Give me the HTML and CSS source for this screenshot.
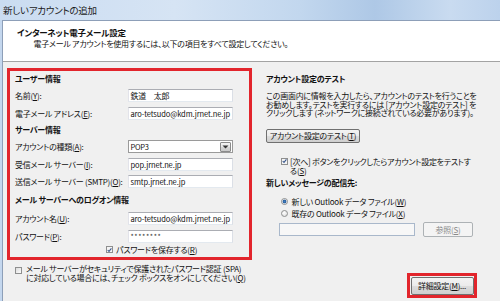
FILE: index.html
```html
<!DOCTYPE html>
<html lang="ja">
<head>
  <meta charset="UTF-8">
  <title>新しいアカウントの追加</title>
  <link rel="stylesheet" href="styles.css">
</head>
<body>
  <div class="window">
    <div class="titlebar">新しいアカウントの追加</div>
    <div class="client">
      <div class="header">
        <h1>インターネット電子メール設定</h1>
        <p>電子メール アカウントを使用するには、以下の項目をすべて設定してください。</p>
      </div>

      <div class="main">
        <div class="left">
          <div class="mark fields">
            <h2 class="h-user">ユーザー情報</h2>
            <div class="row"><span class="label">名前(<u>Y</u>):</span><span class="input">鉄道　太郎</span></div>
            <div class="row"><span class="label">電子メール アドレス(<u>E</u>):</span><span class="input latin">aro-tetsudo@kdm.jrnet.ne.jp</span></div>

            <h2 class="h-server">サーバー情報</h2>
            <div class="row"><span class="label">アカウントの種類(<u>A</u>):</span>
              <span class="input select"><span class="value">POP3</span><span class="arrow"><svg width="7" height="4" viewBox="0 0 7 4"><path d="M0.5 0.5 L3.5 3.5 L6.5 0.5 Z" fill="#333"/></svg></span></span>
            </div>
            <div class="row"><span class="label">受信メール サーバー(<u>I</u>):</span><span class="input latin">pop.jrnet.ne.jp</span></div>
            <div class="row"><span class="label">送信メール サーバー (SMTP)(<u>O</u>):</span><span class="input latin">smtp.jrnet.ne.jp</span></div>

            <h2 class="h-logon">メール サーバーへのログオン情報</h2>
            <div class="row"><span class="label">アカウント名(<u>U</u>):</span><span class="input latin">aro-tetsudo@kdm.jrnet.ne.jp</span></div>
            <div class="row"><span class="label">パスワード(<u>P</u>):</span><span class="input pwd">********</span></div>
            <div class="row save">
              <span class="check on"><svg width="6" height="6" viewBox="0 0 6 6"><path d="M0.8 3 L2.4 4.7 L5.3 1" fill="none" stroke="#3c5a8f" stroke-width="1.3"/></svg></span>
              <span>パスワードを保存する(<u>R</u>)</span>
            </div>
          </div>

          <div class="spa">
            <span class="check"></span>
            <p>メール サーバーがセキュリティで保護されたパスワード認証 (SPA)<br>に対応している場合には、チェック ボックスをオンにしてください(<u>Q</u>)</p>
          </div>
        </div>

        <div class="right">
          <h2>アカウント設定のテスト</h2>
          <p class="note">この画面内に情報を入力したら、アカウントのテストを行うことを<br>お勧めします。テストを実行するには [アカウント設定のテスト] を<br>クリックします (ネットワークに接続されている必要があります)。</p>
          <div class="btn test"><span>アカウント設定のテスト(<u>T</u>)</span></div>

          <div class="next">
            <span class="check on"><svg width="6" height="6" viewBox="0 0 6 6"><path d="M0.8 3 L2.4 4.7 L5.3 1" fill="none" stroke="#3c5a8f" stroke-width="1.3"/></svg></span>
            <p>[次へ] ボタンをクリックしたらアカウント設定をテストす<br>る(<u>S</u>)</p>
          </div>

          <h2 class="h-dest">新しいメッセージの配信先:</h2>
          <div class="radio-row"><span class="radio on"></span><span>新しい Outlook データ ファイル(<u>W</u>)</span></div>
          <div class="radio-row"><span class="radio"></span><span>既存の Outlook データ ファイル(<u>X</u>)</span></div>
          <div class="browse">
            <span class="path"></span>
            <span class="btn off"><span>参照(<u>S</u>)</span></span>
          </div>

          <div class="actions">
            <div class="mark thin"><span class="btn more"><span>詳細設定(<u>M</u>)...</span></span></div>
          </div>
        </div>
      </div>
    </div>
  </div>
</body>
</html>
```

FILE: styles.css
```css
* { margin: 0; padding: 0; box-sizing: border-box; }

body {
  width: 500px; height: 301px; overflow: hidden;
  font-family: "Noto Sans CJK JP", sans-serif;
  font-size: 8px; color: #111;
  letter-spacing: -0.25px;
  font-feature-settings: "palt";
  background: #c4d7ee;
}

u { text-decoration: underline; text-underline-offset: 1px; }

.window { height: 301px; display: flex; flex-direction: column; }

.titlebar {
  height: 20px; line-height: 20px; padding-left: 3px;
  font-size: 9.5px; color: #1a1a1a;
  background: linear-gradient(90deg, #cadcf1 0%, #d6e4f4 35%, #c2d7ee 60%, #aec8e6 75%, #c9dbf0 90%, #bcd2ec 100%);
}

.client {
  flex: 1; margin-left: 2px;
  border-left: 1px solid #8d9fb8; border-top: 1px solid #8d9fb8;
  background: #f0f0f0;
  display: flex; flex-direction: column;
}

.header {
  height: 41px; background: #fff;
  border-bottom: 1px solid #a3a3a3;
  padding: 4.5px 0 0 14px;
}
.header h1 { font-size: 8.5px; font-weight: 700; line-height: 12px; }
.header p { line-height: 12px; padding-left: 16.5px; }

.main { display: flex; padding: 6px 0 0 4px; gap: 14px; }

/* red marker frame */
.mark { border: 3px solid #e2252c; }

.left { width: 245px; }

.fields { padding: 0 0 3px 5px; }
.fields h2 { font-size: 8px; font-weight: 700; height: 16px; line-height: 16px; }
.fields .h-logon { height: 17px; margin: 2.5px 0 0; line-height: 14px; }

.row { display: flex; align-items: center; height: 17.5px; }
.row .label { width: 113px; white-space: nowrap; }

.input {
  width: 105px; height: 13px;
  border: 1px solid #abadb3; border-color: #abadb3 #dbdfe6 #e3e9ef #e2e3ea;
  background: #fff; padding-left: 1.5px;
  line-height: 11px; white-space: nowrap; overflow: hidden;
}
.input.latin { font-size: 7.5px; letter-spacing: -0.1px; }
.input.pwd { font-size: 7px; letter-spacing: 0.6px; color: #333; }

.select { display: flex; align-items: center; justify-content: space-between; border-color: #9a9a9a; padding-right: 1px; font-size: 7.5px; }
.select .arrow {
  width: 11px; height: 10px;
  border: 1px solid #8b8b8b; border-radius: 1px;
  background: linear-gradient(#f4f4f4, #e6e6e6 50%, #d6d6d6 51%, #c9c9c9);
  display: flex; align-items: center; justify-content: center;
}

.row.save { height: 9px; padding-left: 91px; gap: 3px; }

.check {
  width: 7px; height: 7px; flex: none;
  border: 1px solid #8e8f8f;
  background: linear-gradient(135deg, #dcdcdc, #fdfdfd);
  display: inline-flex; align-items: center; justify-content: center;
}
.check.on { background: #f4f4f4; }

.spa { display: flex; gap: 4px; padding: 5px 0 0 8px; }
.spa .check { margin-top: 1.5px; }
.spa p { line-height: 8.5px; white-space: nowrap; }

.right { width: 211px; padding-top: 4.5px; display: flex; flex-direction: column; }
.right h2 { font-size: 8px; font-weight: 700; line-height: 12px; }
.right .note { margin-top: 7.5px; line-height: 8.5px; white-space: nowrap; }

.btn {
  display: inline-flex; align-items: center; justify-content: center;
  border: 1px solid #707070; border-radius: 2px;
  background: linear-gradient(#f3f3f3 0%, #ebebeb 49%, #dddddd 50%, #cfcfcf 100%);
  white-space: nowrap;
}
.btn.test { width: 94px; height: 13.5px; margin-top: 11.5px; }
.btn.off { border-color: #adb2b5; background: #f4f4f4; color: #8a8a8a; }

.next { display: flex; gap: 2px; padding-left: 15px; margin-top: 14.5px; }
.next .check { margin-top: 0.5px; }
.next p { line-height: 9px; white-space: nowrap; }

.right .h-dest { margin-top: 2px; }

.radio-row { display: flex; align-items: center; gap: 4px; padding-left: 14.5px; height: 12px; white-space: nowrap; }
.h-dest + .radio-row { margin-top: 6px; }

.radio {
  width: 7px; height: 7px; border-radius: 50%; flex: none;
  border: 1px solid #8e8f8f;
  background: radial-gradient(circle at 40% 35%, #ffffff, #d8d8d8);
}
.radio.on { background: radial-gradient(circle, #3f7fbf 0, #2a5f9e 1.6px, #e9eef4 2.2px, #d6d6d6); }

.browse { display: flex; align-items: center; gap: 8px; padding-left: 13px; margin-top: 3px; }
.path { width: 136px; height: 13px; border: 1px solid #a9b8cb; background: #f7f7f7; }
.btn.off { width: 50px; height: 15px; }

.actions { display: flex; justify-content: flex-end; margin-top: 36px; }
.mark.thin { padding: 0.5px; }
.btn.more { width: 63px; height: 18px; }
```
